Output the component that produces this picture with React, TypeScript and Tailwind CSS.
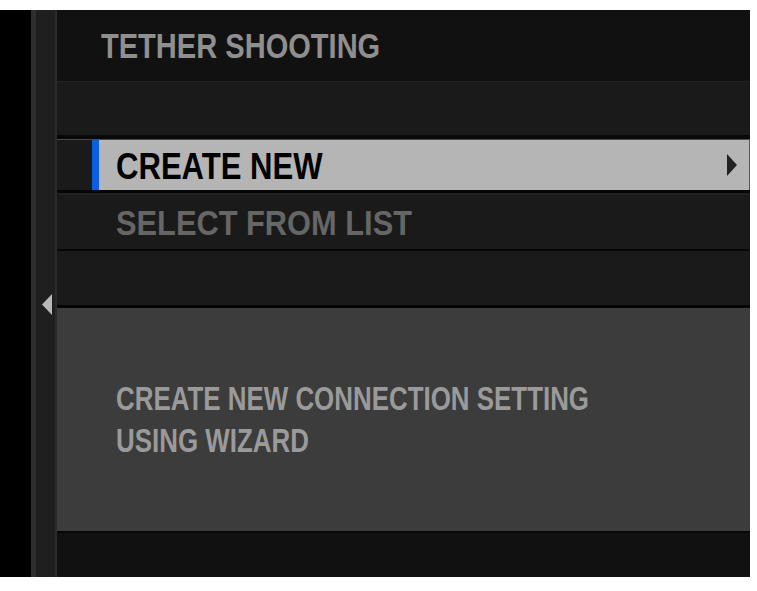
export default function App() {
  return (
    <div className="w-[757px] h-[591px] bg-white pt-[10px] font-['Liberation_Sans',Arial,sans-serif] font-bold">
      <div className="flex w-[750px] h-[567px]">
        {/* Left rail */}
        <div className="w-[31px] bg-black" />
        <div className="w-[5px] bg-[#2e2e2e]" />
        <div className="w-[19px] bg-[#1f1f1f] pt-[284px] pl-[6px]">
          <svg width="10" height="21" viewBox="0 0 10 21">
            <polygon points="10,0 10,21 0,10.5" fill="#b8b8b8" />
          </svg>
        </div>
        <div className="w-[2px] bg-[#2b2b2b]" />

        {/* Main */}
        <div className="flex-1 flex flex-col">
          <div className="h-[71px] bg-[#111111] flex items-center pl-[44px]">
            <span className="inline-block origin-left scale-x-[0.83] text-[35px] leading-none text-[#8f8f8f] whitespace-nowrap">
              TETHER SHOOTING
            </span>
          </div>
          <div className="h-px bg-[#222222]" />
          <div className="h-[53px] bg-[#1a1a1a]" />
          <div className="h-[4px] bg-[#080808]" />
          <div className="h-px bg-[#4a4a4a]" />

          {/* Selected */}
          <div className="h-[50px] flex bg-[#1a1a1a]">
            <div className="w-[35px]" />
            <div className="w-[7px] bg-[#0a5fe0]" />
            <div className="flex-1 bg-[#b5b5b5] flex items-center pl-[17px] pr-[12px] pt-[3px]">
              <div className="flex-1">
                <span className="inline-block origin-left scale-x-[0.84] text-[37px] leading-none text-black whitespace-nowrap">
                  CREATE NEW
                </span>
              </div>
              <svg width="10" height="22" viewBox="0 0 10 22" className="-mt-[3px]">
                <polygon points="0,0 10,11 0,22" fill="#222222" />
              </svg>
            </div>
            <div className="w-px bg-[#555555]" />
          </div>
          <div className="h-[3px] bg-[#060606]" />
          <div className="h-[2px] bg-[#202020]" />

          <div className="h-[54px] bg-[#1a1a1a] flex items-center pl-[59px]">
            <span className="inline-block origin-left scale-x-[0.88] text-[35px] leading-none text-[#666666] whitespace-nowrap">
              SELECT FROM LIST
            </span>
          </div>
          <div className="h-[2px] bg-[#080808]" />
          <div className="h-[54px] bg-[#1a1a1a]" />
          <div className="h-[3px] bg-[#050505]" />

          {/* Help panel */}
          <div className="h-[223px] bg-[#3c3c3c] flex items-center pl-[59px]">
            <p className="origin-left scale-x-[0.785] text-[33px] leading-[42px] text-[#9a9a9a] whitespace-nowrap">
              CREATE NEW CONNECTION SETTING
              <br />
              USING WIZARD
            </p>
          </div>
          <div className="h-[2px] bg-[#070707]" />
          <div className="flex-1 bg-[#111111]" />
        </div>
      </div>
    </div>
  )
}
